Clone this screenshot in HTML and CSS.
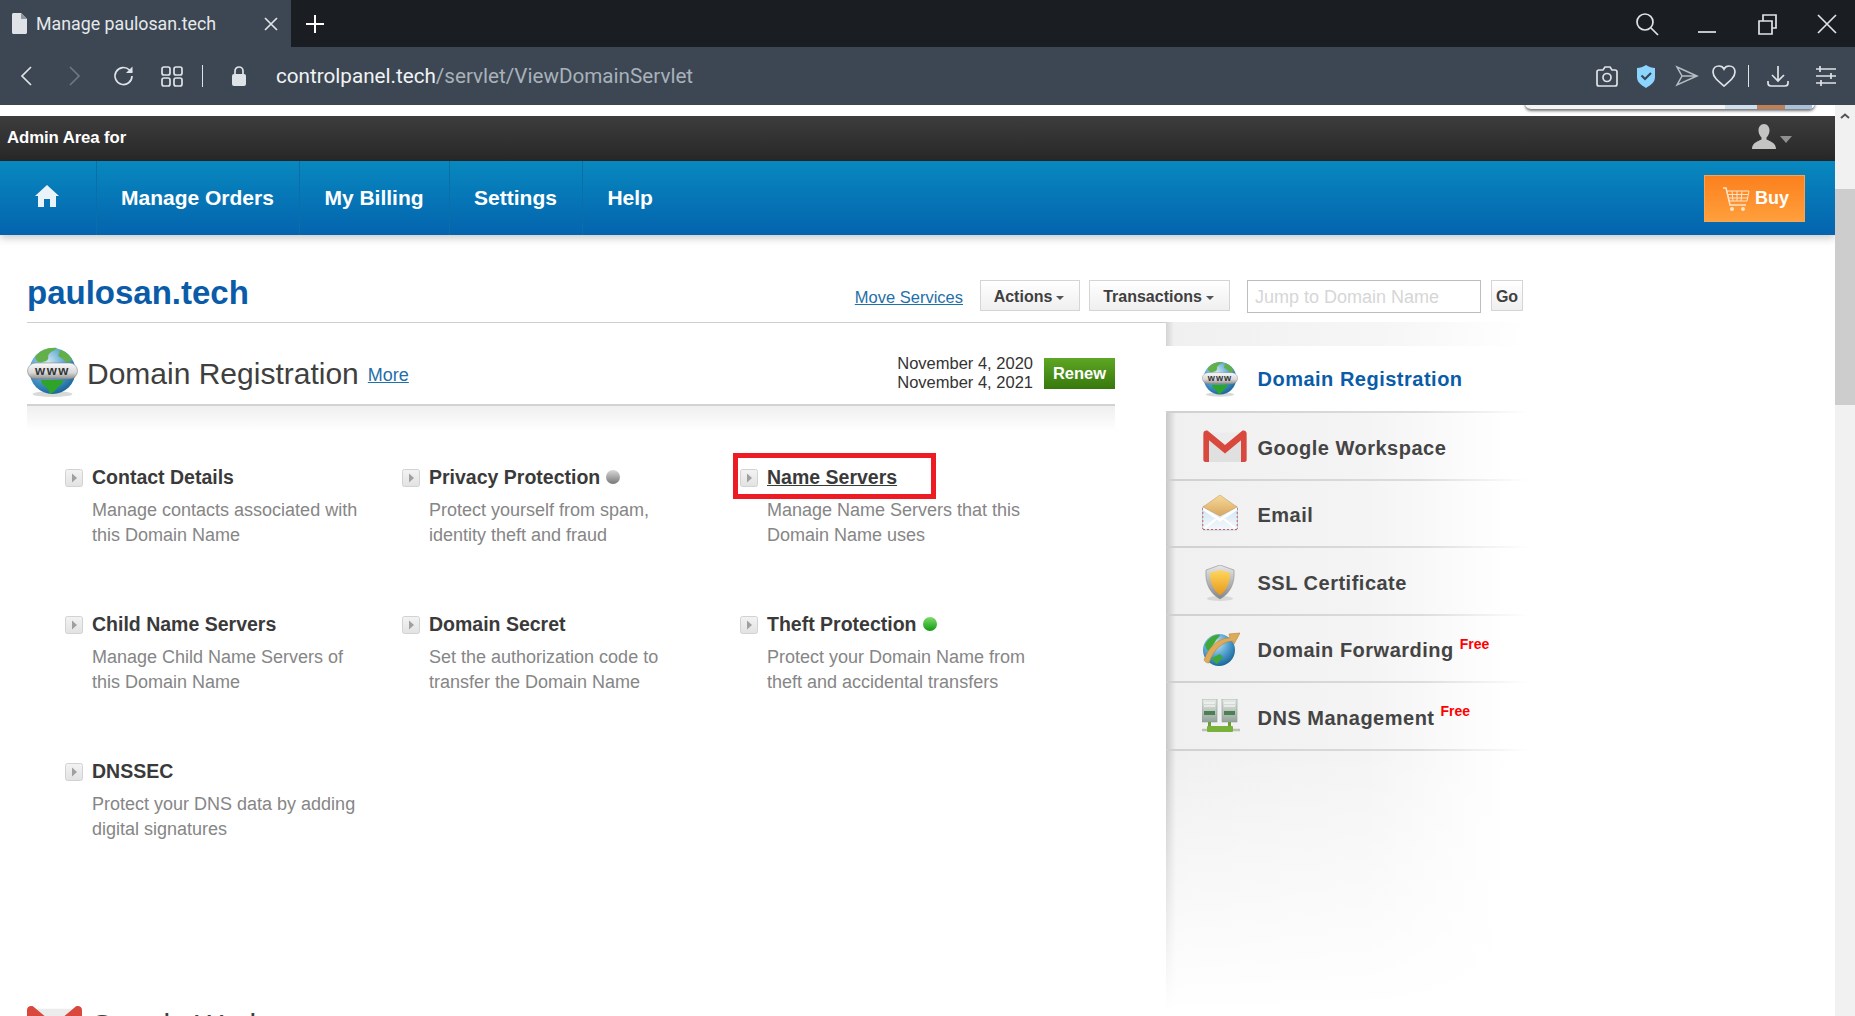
FILE: index.html
```
<!DOCTYPE html>
<html lang="en">
<head>
<meta charset="utf-8">
<title>Manage paulosan.tech</title>
<link rel="stylesheet" href="styles.css">
</head>
<body>
<svg class="defs" width="0" height="0" aria-hidden="true">
  <defs>
    <radialGradient id="gSea" cx="40%" cy="30%" r="75%"><stop offset="0" stop-color="#cfe6f2"/><stop offset=".55" stop-color="#4f9fd0"/><stop offset="1" stop-color="#155f92"/></radialGradient>
    <linearGradient id="gBand" x1="0" y1="0" x2="0" y2="1"><stop offset="0" stop-color="#fafafa"/><stop offset=".6" stop-color="#d8d8d8"/><stop offset="1" stop-color="#8f8f8f"/></linearGradient>
    <linearGradient id="gGold" x1="0" y1="0" x2="0" y2="1"><stop offset="0" stop-color="#ffd75e"/><stop offset="1" stop-color="#e59a1c"/></linearGradient>
    <linearGradient id="gShield" x1="0" y1="0" x2="0" y2="1"><stop offset="0" stop-color="#e8e8e8"/><stop offset="1" stop-color="#858585"/></linearGradient>
    <linearGradient id="gFlap" x1="0" y1="0" x2="0" y2="1"><stop offset="0" stop-color="#f6d99a"/><stop offset="1" stop-color="#d9a860"/></linearGradient>
    <linearGradient id="gPaper" x1="0" y1="0" x2="0" y2="1"><stop offset="0" stop-color="#cfe4f3"/><stop offset="1" stop-color="#f4f9fc"/></linearGradient>
    <linearGradient id="gDotG" x1="0" y1="0" x2="0" y2="1"><stop offset="0" stop-color="#7ddc6a"/><stop offset="1" stop-color="#129a12"/></linearGradient>
    <linearGradient id="gDotS" x1="0" y1="0" x2="0" y2="1"><stop offset="0" stop-color="#d8d8d8"/><stop offset="1" stop-color="#777777"/></linearGradient>
    <linearGradient id="gServer" x1="0" y1="0" x2="0" y2="1"><stop offset="0" stop-color="#e6ebe6"/><stop offset="1" stop-color="#93a39a"/></linearGradient>
    <linearGradient id="gBox" x1="0" y1="0" x2="0" y2="1"><stop offset="0" stop-color="#f3f3f3"/><stop offset="1" stop-color="#e2e2e2"/></linearGradient>
    <symbol id="globe" viewBox="0 0 51 50">
      <ellipse cx="25.5" cy="47" rx="20" ry="3" fill="#000" opacity=".15"/>
      <circle cx="25.5" cy="24" r="23" fill="url(#gSea)"/>
      <path d="M8 10C13 3 22 0 30 1c-2 3-6 3-8 6-2 2 1 5-3 7-4 1-6 2-7 1-2 0-3-2-4-5zM33 3c5 1 10 5 12 10l-5 3-4-4-5-3z" fill="#63b04a"/>
      <path d="M14 33h22c1 3-3 5-6 8-2 3-4 5-7 6-1-3-2-5-4-7-3-2-5-4-5-7z" fill="#2ea52a"/>
      <rect x="0.5" y="16" width="50" height="16" rx="8" fill="url(#gBand)" stroke="#777" stroke-width=".5"/>
      <text x="25.5" y="28" text-anchor="middle" class="www">www</text>
    </symbol>
    <symbol id="gmail" viewBox="0 0 46 34">
      <path d="M2 3h42v31H2z" fill="#ececec"/>
      <path d="M5 34V8l18 15L41 8v26z" fill="#e0e0e0"/>
      <path d="M0 4c0-3 3-4 5-3l18 15L41 1c2-1 5 0 5 3v28c0 1-1 2-2 2h-4V11L23 25 6 11v23H2c-1 0-2-1-2-2z" fill="#d8483c"/>
    </symbol>
    <symbol id="mail" viewBox="0 0 36 36">
      <rect x=".5" y="11" width="35" height="24" rx="2" fill="url(#gPaper)" stroke="#a9c0d1" stroke-width=".7"/>
      <path d="M1 34.500h34M.8 13v21M35.200 13v21" fill="none" stroke="#c2606a" stroke-width="1" stroke-dasharray="2 2"/>
      <path d="M1 15 18 27 35 15v-3L18 23 1 12z" fill="#fff"/>
      <path d="M3 33 14 24M33 33 22 24" stroke="#fff" stroke-width="2"/>
      <path d="M1 12 18 0 35 12 18 21z" fill="url(#gFlap)" stroke="#c9a062" stroke-width=".6"/>
    </symbol>
    <symbol id="shield" viewBox="0 0 30 36">
      <ellipse cx="15" cy="33.500" rx="13" ry="2.500" fill="#000" opacity=".1"/>
      <path d="M15 0 29 5c1 12-3 23-14 29C4 28 0 17 1 5z" fill="url(#gShield)" stroke="#8b8b8b" stroke-width=".6"/>
      <path d="M15 5 25 8c0 9-3 17-10 22C8 25 5 17 5 8z" fill="url(#gGold)"/>
    </symbol>
    <symbol id="forward" viewBox="0 0 38 36">
      <circle cx="17" cy="20" r="16" fill="url(#gSea)"/>
      <path d="M3 15c3-7 9-11 15-10-1 3-4 4-5 7-2 2-3 6-6 9-2 0-3-3-4-6zM10 28l8-4 3 3-6 7c-2-1-4-3-5-6z" fill="#3fa83a"/>
      <path d="M2 30C8 14 18 8 28 8l-1-4 11-1-6 11-1-3C22 11 12 18 7 33c-2 0-4-1-5-3z" fill="#dcab5c" stroke="#b98431" stroke-width=".6"/>
    </symbol>
    <symbol id="dns" viewBox="0 0 44 34">
      <rect x="0" y="0" width="15" height="23" fill="url(#gServer)" stroke="#8d9a93" stroke-width=".6"/>
      <rect x="20" y="0" width="15" height="23" fill="url(#gServer)" stroke="#8d9a93" stroke-width=".6"/>
      <path d="M2 4h11M2 7h11M22 4h11M22 7h11" stroke="#fff" stroke-width="1.200"/>
      <rect x="2" y="12" width="11" height="4" fill="#4d7f55"/><rect x="22" y="12" width="11" height="4" fill="#4d7f55"/>
      <path d="M7.500 23v5M27.500 23v5" stroke="#6a9f33" stroke-width="3"/>
      <path d="M0 31h38" stroke="#b9c3b3" stroke-width="2.500"/>
      <rect x="5" y="27" width="26" height="6" rx="1" fill="#79b13b"/>
    </symbol>
    <symbol id="arrowbox" viewBox="0 0 18 18">
      <rect x=".5" y=".5" width="17" height="17" rx="2" fill="url(#gBox)" stroke="#d2d2d2"/>
      <path d="M7 4.500 12 9l-5 4.500z" fill="#a0a0a0"/>
    </symbol>
  </defs>
</svg>

<header class="browser">
  <div class="tabbar">
    <div class="tab">
      <svg class="tab-doc" viewBox="0 0 15 21"><path d="M0 1.500C0 .7.700 0 1.500 0H9l6 6v13.500c0 .8-.7 1.500-1.500 1.500h-12C.7 21 0 20.300 0 19.500z" fill="#dfe3e7"/><path d="M9 0v6h6z" fill="#8d97a1"/></svg>
      <span class="tab-title">Manage paulosan.tech</span>
      <svg class="icon16" viewBox="0 0 16 16"><path d="M2 2l12 12M14 2 2 14" class="st"/></svg>
    </div>
    <svg class="icon-new" viewBox="0 0 24 24"><path d="M12 3v18M3 12h18" class="st-w"/></svg>
    <div class="win-controls">
      <svg class="ic" viewBox="0 0 24 24"><circle cx="10" cy="10" r="8" class="st"/><path d="m16 16 7 7" class="st"/></svg>
      <svg class="ic" viewBox="0 0 24 24"><path d="M3 20h18" class="st"/></svg>
      <svg class="ic" viewBox="0 0 24 24"><path d="M4 9h13v13H4zM8 9V3h13v13h-4" class="st"/></svg>
      <svg class="ic" viewBox="0 0 24 24"><path d="M3 3l18 18M21 3 3 21" class="st"/></svg>
    </div>
  </div>
  <div class="toolbar">
    <svg class="ic m-back" viewBox="0 0 24 24"><path d="M16 3 7 12l9 9" class="st"/></svg>
    <svg class="ic m-fwd" viewBox="0 0 24 24"><path d="M8 3l9 9-9 9" class="st-dim"/></svg>
    <svg class="ic m-rel" viewBox="0 0 24 24"><path d="M20 12a8.500 8.500 0 1 1-2.500-6L20 8" class="st"/><path d="M20.500 2.500V9H14z" fill="#dfe3e7"/></svg>
    <svg class="ic m-grid" viewBox="0 0 24 24"><rect x="2" y="3" width="8" height="8" rx="2" class="st"/><rect x="14" y="3" width="8" height="8" rx="2" class="st"/><rect x="2" y="14" width="8" height="8" rx="2" class="st"/><rect x="14" y="14" width="8" height="8" rx="2" class="st"/></svg>
    <span class="tb-sep m-sep"></span>
    <svg class="ic m-lock" viewBox="0 0 24 24"><path d="M8 11V7a4 4 0 0 1 8 0v4" class="st"/><rect x="5" y="10" width="14" height="12" rx="2" fill="#dfe3e7"/></svg>
    <div class="url"><span class="url-host">controlpanel.tech</span><span class="url-path">/servlet/ViewDomainServlet</span></div>
    <div class="tb-right">
      <svg class="ic" viewBox="0 0 24 24"><path d="M2 8c0-1 1-2 2-2h4l2-3h5l2 3h3c1 0 2 1 2 2v12c0 1-1 2-2 2H4c-1 0-2-1-2-2z" class="st"/><circle cx="12" cy="13.500" r="4" class="st"/></svg>
      <svg class="ic m-shield" viewBox="0 0 24 24"><path d="M12 1c3 2 6 3 9 3v9c0 5-4 8-9 11-5-3-9-6-9-11V4c3 0 6-1 9-3z" fill="#8cd5ff"/><path d="m7.500 11.500 3.500 3.500 6-6" fill="none" stroke="#34495c" stroke-width="2.200"/></svg>
      <svg class="ic m-send" viewBox="0 0 24 24"><path d="M2 3l20 9-20 9 5-9zM7 12h15" class="st-dim2"/></svg>
      <svg class="ic m-heart" viewBox="0 0 24 24"><path d="M12 22C6 17 1 13 1 8c0-4 3-6 6-6 2 0 4 1 5 3 1-2 3-3 5-3 3 0 6 2 6 6 0 5-5 9-11 14z" class="st"/></svg>
      <span class="tb-sep m-sep2"></span>
      <svg class="ic m-dl" viewBox="0 0 24 24"><path d="M12 2v14M6 11l6 6 6-6M2 17v2c0 2 1 3 3 3h14c2 0 3-1 3-3v-2" class="st"/></svg>
      <svg class="ic m-sl" viewBox="0 0 24 24"><path d="M2 5h20M2 12h20M2 19h20" class="st"/><path d="M6 2v6M17 9v6M7 16v6" class="st"/></svg>
    </div>
  </div>
</header>

<div class="viewport">
  <div class="page">
    <div class="page-gap">
      <div class="peek"><span class="peek-a"></span><span class="peek-b"></span><span class="peek-c"></span></div>
    </div>
    <div class="adminbar">
      <span class="admin-text">Admin Area for</span>
      <svg class="user" viewBox="0 0 24 25"><path d="M12 0c3.500 0 5.500 3 5.500 6.500 0 3-1.500 5.500-3 7v2c3 1.500 9.500 3 9.500 9.500H0c0-6.500 6.500-8 9.500-9.500v-2c-1.500-1.500-3-4-3-7C6.500 3 8.500 0 12 0z" fill="#c4c4c2"/></svg>
      <span class="user-caret"></span>
    </div>
    <nav class="navbar">
      <a class="nav-home"><svg class="home" viewBox="0 0 24 22"><path d="M12 0 24 11h-3v11h-6v-8H9v8H3V11H0z" fill="#e9f3f9"/></svg></a>
      <a class="nav-item">Manage Orders</a>
      <a class="nav-item">My Billing</a>
      <a class="nav-item">Settings</a>
      <a class="nav-item nav-last">Help</a>
      <a class="buy">
        <svg class="cart" viewBox="0 0 28 24"><path d="M1 1h3l4 17h16" fill="none" stroke="#fde4c9" stroke-width="1.500"/><path d="M5 4h22l-2 10H7zM10 4l1 10M15 4v10M20 4l-1 10M6 7.500h20M7 11h18" fill="none" stroke="#fde4c9"/><circle cx="10" cy="22" r="2" fill="#fde4c9"/><circle cx="21" cy="22" r="2" fill="#fde4c9"/></svg>
        <span>Buy</span>
      </a>
    </nav>

    <div class="content">
      <div class="title-row">
        <h1 class="domain">paulosan.tech</h1>
        <div class="title-tools">
          <a class="link move">Move Services</a>
          <button class="btn btn-actions">Actions<i class="caret"></i></button>
          <button class="btn btn-trans">Transactions<i class="caret"></i></button>
          <input class="jump" placeholder="Jump to Domain Name">
          <button class="btn btn-go">Go</button>
        </div>
      </div>
      <div class="columns">
        <main class="main">
          <section>
            <div class="sec-head">
              <svg class="sec-icon"><use href="#globe"/></svg>
              <h2 class="sec-title">Domain Registration</h2>
              <a class="link more">More</a>
              <div class="dates"><div>November 4, 2020</div><div>November 4, 2021</div></div>
              <a class="renew">Renew</a>
            </div>
            <div class="sec-fade"></div>
            <div class="grid">
              <div class="item"><svg class="item-ic"><use href="#arrowbox"/></svg><div><h3 class="item-title">Contact Details</h3><p class="item-desc">Manage contacts associated with<br>this Domain Name</p></div></div>
              <div class="item"><svg class="item-ic"><use href="#arrowbox"/></svg><div><h3 class="item-title">Privacy Protection <svg class="dot" viewBox="0 0 14 14"><circle cx="7" cy="7" r="7" fill="url(#gDotS)"/></svg></h3><p class="item-desc">Protect yourself from spam,<br>identity theft and fraud</p></div></div>
              <div class="item"><svg class="item-ic"><use href="#arrowbox"/></svg><div><h3 class="item-title"><u>Name Servers</u></h3><p class="item-desc">Manage Name Servers that this<br>Domain Name uses</p></div><span class="highlight"></span></div>
              <div class="item"><svg class="item-ic"><use href="#arrowbox"/></svg><div><h3 class="item-title">Child Name Servers</h3><p class="item-desc">Manage Child Name Servers of<br>this Domain Name</p></div></div>
              <div class="item"><svg class="item-ic"><use href="#arrowbox"/></svg><div><h3 class="item-title">Domain Secret</h3><p class="item-desc">Set the authorization code to<br>transfer the Domain Name</p></div></div>
              <div class="item"><svg class="item-ic"><use href="#arrowbox"/></svg><div><h3 class="item-title">Theft Protection <svg class="dot" viewBox="0 0 14 14"><circle cx="7" cy="7" r="7" fill="url(#gDotG)"/></svg></h3><p class="item-desc">Protect your Domain Name from<br>theft and accidental transfers</p></div></div>
              <div class="item"><svg class="item-ic"><use href="#arrowbox"/></svg><div><h3 class="item-title">DNSSEC</h3><p class="item-desc">Protect your DNS data by adding<br>digital signatures</p></div></div>
            </div>
          </section>
          <section class="sec-next">
            <div class="sec-head">
              <svg class="sec-icon sec-gmail"><use href="#gmail"/></svg>
              <h2 class="sec-title">Google Workspace</h2>
            </div>
          </section>
        </main>
        <aside class="side">
          <div class="side-top"></div>
          <a class="side-row active"><svg class="side-ic ic-globe"><use href="#globe"/></svg><span>Domain Registration</span></a>
          <a class="side-row"><svg class="side-ic ic-gmail"><use href="#gmail"/></svg><span>Google Workspace</span></a>
          <a class="side-row"><svg class="side-ic ic-mail"><use href="#mail"/></svg><span>Email</span></a>
          <a class="side-row"><svg class="side-ic ic-shield"><use href="#shield"/></svg><span>SSL Certificate</span></a>
          <a class="side-row"><svg class="side-ic ic-forward"><use href="#forward"/></svg><span>Domain Forwarding</span><sup class="free">Free</sup></a>
          <a class="side-row"><svg class="side-ic ic-dns"><use href="#dns"/></svg><span>DNS Management</span><sup class="free">Free</sup></a>
          <div class="side-rest"></div>
        </aside>
      </div>
    </div>
  </div>
  <div class="scrollbar">
    <svg class="sb-arrow" viewBox="0 0 10 6"><path d="M1 5 5 1.500 9 5" fill="none" stroke="#555" stroke-width="2"/></svg>
    <div class="sb-thumb"></div>
  </div>
</div>
</body>
</html>
```

FILE: styles.css
```
* { box-sizing: border-box; }
html, body { margin: 0; padding: 0; }
body {
  width: 1855px;
  height: 1016px;
  overflow: hidden;
  background: #fff;
  font-family: "Liberation Sans", Arial, sans-serif;
  color: #3f3f3f;
}
.defs { position: absolute; }
.www { font: bold 13px "Liberation Sans", sans-serif; fill: #333; letter-spacing: 1.500px; }

/* browser chrome */
.browser { font-family: Roboto, "Noto Sans", sans-serif; }
.tabbar { height: 47px; background: #1a1d22; display: flex; align-items: center; }
.tab {
  width: 291px; height: 47px; background: #3c4753;
  display: flex; align-items: center; padding: 0 12px; color: #e6e9ec;
}
.tab-doc { width: 15px; height: 21px; margin-right: 9px; }
.tab-title { font-size: 17.800px; flex: 1; }
.icon16 { width: 16px; height: 16px; }
.icon-new { width: 24px; height: 24px; margin-left: 12px; }
.ic { width: 24px; height: 24px; flex: none; }
.st, .st-w, .st-dim, .st-dim2 { fill: none; stroke-width: 1.700; }
.st { stroke: #dfe3e7; }
.st-w { stroke: #fff; stroke-width: 2; }
.st-dim { stroke: #6d7884; }
.st-dim2 { stroke: #b6bcc3; stroke-width: 1.500; }
.win-controls { margin-left: auto; display: flex; gap: 36px; padding-right: 16px; }

.toolbar { height: 58px; background: #3c4753; display: flex; align-items: center; padding: 0 17px 0 15px; }
.m-fwd { margin-left: 23px; }
.m-rel { margin-left: 26px; }
.m-grid { margin-left: 24px; }
.tb-sep { width: 1px; height: 22px; background: #dfe3e7; flex: none; }
.m-sep { margin-left: 18px; }
.m-lock { margin-left: 24px; }
.url { margin-left: 25px; font-size: 20.650px; white-space: nowrap; }
.url-host { color: #f1f3f5; }
.url-path { color: #a9b1ba; }
.tb-right { margin-left: auto; display: flex; align-items: center; }
.m-shield { margin-left: 15px; }
.m-send { margin-left: 17px; }
.m-heart { margin-left: 13px; }
.m-sep2 { margin-left: 12px; }
.m-dl { margin-left: 17px; }
.m-sl { margin-left: 24px; }

/* viewport */
.viewport { display: flex; height: 911px; }
.page { flex: 1; min-width: 0; overflow: hidden; }
.page-gap { height: 11px; position: relative; }
.peek {
  position: absolute; left: 1525px; top: -6px; width: 290px; height: 10px;
  background: #f4f4f4; border-radius: 0 0 6px 6px;
  box-shadow: 0 2px 3px rgba(0, 0, 0, .55); display: flex; justify-content: flex-end; padding-right: 3px;
}
.peek-a { width: 32px; background: #cfdfee; }
.peek-b { width: 28px; background: #c07f56; }
.peek-c { width: 27px; background: #a9c1d8; }

.adminbar {
  height: 45px; display: flex; align-items: center; padding-left: 7px;
  background: linear-gradient(#3d3d3d, #272727);
}
.admin-text { color: #fff; font-weight: bold; font-size: 16.800px; letter-spacing: -.1px; margin-top: -2px; }
.user { width: 24px; height: 25px; margin-left: auto; margin-top: -4px; }
.user-caret {
  width: 0; height: 0; margin: 2px 43px 0 4px;
  border: 6px solid transparent; border-top: 7px solid #8f8f8f; border-bottom: 0;
}

.navbar {
  height: 74px; display: flex; align-items: stretch; position: relative;
  background: linear-gradient(#0888bf, #0464ae);
  box-shadow: 0 3px 8px rgba(0, 0, 0, .22);
  color: #fff;
}
.nav-home { width: 97px; display: flex; align-items: center; justify-content: center; border-right: 1px solid #0a6fa6; padding: 0 2px 4px 0; }
.home { width: 24px; height: 22px; }
.nav-item {
  display: flex; align-items: center; padding: 0 25.500px 0 24px;
  font-size: 21px; font-weight: bold; border-right: 1px solid #0a6fa6;
}
.nav-last { border-right: 0; }
.buy {
  margin: 14px 30px 13px auto; width: 101px;
  display: flex; align-items: center; gap: 5px; padding-left: 17px;
  background: linear-gradient(#fb801d, #ff9f3c); border: 1px solid #f7a552;
  font-weight: bold; font-size: 18px;
}
.cart { width: 28px; height: 24px; }

/* content */
.content { padding: 0 0 0 27px; }
.title-row {
  height: 88px; width: 1496px; border-bottom: 1px solid #cfcfcf;
  display: flex; align-items: flex-end; justify-content: space-between;
  padding-bottom: 8px;
}
.domain { margin: 0; color: #0b5ca8; font-size: 33px; line-height: 42px; font-weight: bold; }
.title-tools { display: flex; align-items: center; margin-bottom: 1px; }
.link { color: #1f6fa8; text-decoration: underline; }
.move { font-size: 16.500px; margin: 3px 17px 0 0; }
.btn {
  height: 31px; border: 1px solid #d5d5d5; background: linear-gradient(#fff, #efefef);
  font: bold 16px "Liberation Sans", Arial, sans-serif; color: #3f3f3f; padding: 3px 2px 0 0; margin: 0 9px 0 0;
}
.btn-actions { width: 100px; }
.btn-trans { width: 141px; margin-right: 17px; }
.btn-go { width: 32px; margin: 0; padding: 3px 0 0; }
.caret {
  display: inline-block; width: 0; height: 0; margin-left: 4px; vertical-align: 2px;
  border: 4px solid transparent; border-top: 4px solid #555; border-bottom: 0;
}
.jump {
  width: 234px; height: 33px; border: 1px solid #bdbdbd; padding: 1px 7px 0; margin: 2px 10px 0 0;
  font: 18px "Liberation Sans", Arial, sans-serif; color: #333; outline: 0;
}
.jump::placeholder { color: #d6d6d6; opacity: 1; }

.columns { display: flex; gap: 51px; align-items: flex-start; }
.main { width: 1088px; flex: none; }
.sec-head {
  height: 83px; padding-top: 20px; display: flex; align-items: center;
  border-bottom: 2px solid #d2d2d2;
}
.sec-icon { width: 51px; height: 50px; flex: none; margin-right: 9px; margin-top: -4px; }
.sec-title { margin: 0; font-size: 30px; font-weight: normal; color: #3f3f3f; }
.more { font-size: 18px; margin-left: 9px; margin-top: 3px; }
.dates { margin: -2px 0 0 auto; font-size: 16.500px; line-height: 19px; color: #333; text-align: right; }
.renew {
  width: 71px; height: 31px; margin: -1px 0 0 11px; display: flex; align-items: center; justify-content: center;
  background: linear-gradient(#5ea624, #37780c); color: #fff; font-size: 16.500px; font-weight: bold;
}
.sec-fade { height: 25px; background: linear-gradient(#efefef, #fff); }
.grid { display: grid; grid-template-columns: 337px 338px 337px; grid-auto-rows: 147px; padding: 34px 0 0 38px; }
.item { display: flex; gap: 9px; position: relative; align-items: flex-start; }
.item-ic { width: 18px; height: 18px; flex: none; margin-top: 4px; }
.item-title { margin: 0; font-size: 19.500px; line-height: 24px; font-weight: bold; color: #3a3a3a; display: flex; align-items: center; gap: 6px; }
.item-desc { margin: 8.500px 0 0; font-size: 18px; line-height: 25px; color: #868686; }
.dot { width: 14px; height: 14px; }
.highlight { position: absolute; left: -7px; top: -12px; width: 203px; height: 46px; border: 5px solid #ed1c24; }
.sec-next { margin-top: 68px; }
.sec-gmail { width: 55px; height: 41px; margin-right: 8px; margin-top: 1px; }

/* sidebar */
.side { width: 362px; flex: none; margin-top: -1px; }
.side-top { height: 24px; background: linear-gradient(90deg, #d4d4d4, #f0f0f0 8px, #f6f6f6 60%, #fff); }
.side-row {
  height: 67.500px; display: flex; align-items: center; padding: 5px 0 0 91.500px; position: relative;
  background: linear-gradient(90deg, #c8c8c8, #f0f0f0 10px, #f4f4f4 55%, #fff 95%);
  border-bottom: 2px solid transparent;
  border-image: linear-gradient(90deg, #d0d0d0, #dcdcdc 70%, #fff) 1;
  font-size: 20px; font-weight: bold; color: #444; letter-spacing: .5px;
}
.side-row.active { background: #fff; color: #0b5ca8; height: 67px; padding-top: 2px; }
.side-ic { position: absolute; top: 50%; }
.ic-globe { left: 36px; width: 36px; height: 36px; margin-top: -18px; }
.ic-gmail { left: 37px; width: 44px; height: 32px; margin-top: -16px; }
.ic-mail { left: 36px; width: 36px; height: 36px; margin-top: -18px; }
.ic-shield { left: 39px; width: 30px; height: 36px; margin-top: -16px; }
.ic-forward { left: 36px; width: 38px; height: 36px; margin-top: -18px; }
.ic-dns { left: 36px; width: 44px; height: 34px; margin-top: -17px; }
.free { color: #f00; font-size: 14px; font-weight: bold; letter-spacing: 0; margin: -14px 0 0 6px; }
.side-rest { height: 260px; background: linear-gradient(#fff0, #fff), linear-gradient(90deg, #c8c8c8, #f0f0f0 10px, #f4f4f4 55%, #fff 95%); }

/* scrollbar */
.scrollbar { width: 20px; flex: none; background: #f1f1f1; position: relative; }
.sb-arrow { width: 10px; height: 6px; position: absolute; left: 5px; top: 8px; }
.sb-thumb { position: absolute; left: 0; right: 0; top: 84px; height: 216px; background: #cdcdcd; }
```
